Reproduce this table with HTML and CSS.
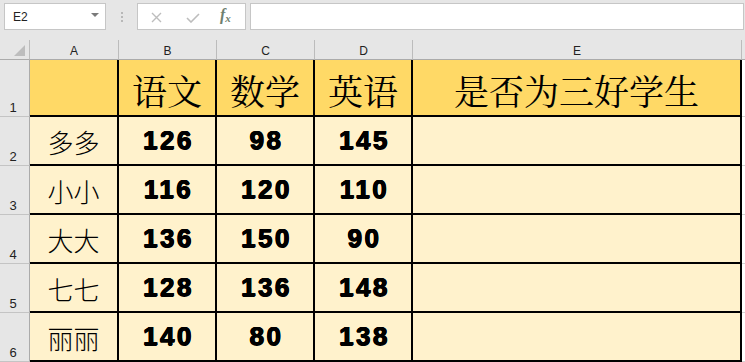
FILE: index.html
```html
<!DOCTYPE html>
<html lang="zh">
<head>
<meta charset="utf-8">
<title>Sheet</title>
<link rel="stylesheet" href="styles.css">
</head>
<body>
<div class="app">
  <div class="toolbar">
    <div class="namebox"><span class="ref">E2</span><span class="caret"></span></div>
    <div class="grip"><i></i><i></i><i></i></div>
    <div class="fxbox">
      <svg class="ico-x" width="11" height="11" viewBox="0 0 11 11"><path d="M1 1L10 10M10 1L1 10" stroke="#bdbdbd" stroke-width="1.4" fill="none"/></svg>
      <svg class="ico-ok" width="14" height="10" viewBox="0 0 14 10"><path d="M1 5L5 9L13 1" stroke="#bdbdbd" stroke-width="1.6" fill="none"/></svg>
      <span class="fx">f<sub>x</sub></span>
    </div>
    <div class="formula"></div>
  </div>
  <div class="sheet">
    <div class="corner"><span class="tri"></span></div>
    <div class="colh">A</div>
    <div class="colh">B</div>
    <div class="colh">C</div>
    <div class="colh">D</div>
    <div class="colh">E</div>
    <div class="colh colh-f"></div>

    <div class="rowh">1</div>
    <div class="cell head"></div>
    <div class="cell head">语文</div>
    <div class="cell head">数学</div>
    <div class="cell head">英语</div>
    <div class="cell head">是否为三好学生</div>
    <div class="rest"></div>

    <div class="rowh">2</div>
    <div class="cell name">多多</div>
    <div class="cell num">126</div>
    <div class="cell num">98</div>
    <div class="cell num">145</div>
    <div class="cell"></div>
    <div class="rest"></div>

    <div class="rowh">3</div>
    <div class="cell name">小小</div>
    <div class="cell num">116</div>
    <div class="cell num">120</div>
    <div class="cell num">110</div>
    <div class="cell"></div>
    <div class="rest"></div>

    <div class="rowh">4</div>
    <div class="cell name">大大</div>
    <div class="cell num">136</div>
    <div class="cell num">150</div>
    <div class="cell num">90</div>
    <div class="cell"></div>
    <div class="rest"></div>

    <div class="rowh">5</div>
    <div class="cell name">七七</div>
    <div class="cell num">128</div>
    <div class="cell num">136</div>
    <div class="cell num">148</div>
    <div class="cell"></div>
    <div class="rest"></div>

    <div class="rowh">6</div>
    <div class="cell name">丽丽</div>
    <div class="cell num">140</div>
    <div class="cell num">80</div>
    <div class="cell num">138</div>
    <div class="cell"></div>
    <div class="rest"></div>
  </div>
</div>
</body>
</html>
```
FILE: styles.css
```css
* { box-sizing: border-box; }
html, body { margin: 0; padding: 0; }
body {
  width: 745px;
  height: 362px;
  overflow: hidden;
  background: #e6e6e6;
  font-family: "Liberation Sans", "Noto Sans CJK SC", sans-serif;
}
.app { display: flex; flex-direction: column; }

.toolbar {
  height: 40px;
  display: flex;
  align-items: flex-start;
  padding-top: 3px;
  background: #e6e6e6;
}
.namebox {
  margin-left: 4px;
  width: 102px;
  height: 27px;
  background: #fff;
  border: 1px solid #c6c6c6;
  display: flex;
  align-items: center;
  justify-content: space-between;
  padding: 0 6px 0 8px;
}
.ref { font-size: 12px; color: #222; }
.caret {
  width: 0; height: 0;
  border-left: 4px solid transparent;
  border-right: 4px solid transparent;
  border-top: 4px solid #7a7a7a;
  margin-top: -3px;
}
.grip {
  width: 31px;
  height: 27px;
  display: flex;
  flex-direction: column;
  align-items: center;
  justify-content: center;
  gap: 2px;
}
.grip i { display: block; width: 2px; height: 2px; background: #b8b8b8; }
.fxbox {
  width: 109px;
  height: 27px;
  background: #fff;
  border: 1px solid #c6c6c6;
  display: flex;
  align-items: center;
  padding-left: 13px;
}
.ico-x { margin-top: 1px; }
.ico-ok { margin-left: 24px; margin-top: 2px; }
.fx {
  margin-left: 20px;
  font-family: "Liberation Serif", serif;
  font-style: italic;
  font-weight: bold;
  font-size: 16px;
  color: #6f806f;
  line-height: 1;
  margin-top: -2px;
}
.fx sub { font-size: 11px; vertical-align: -2px; }
.formula {
  margin-left: 4px;
  width: 494px;
  height: 27px;
  background: #fff;
  border: 1px solid #c6c6c6;
}

.sheet {
  display: grid;
  grid-template-columns: 30px 89px 98px 98px 98px 329px 1fr;
  grid-template-rows: 20px 57px repeat(5, 49px);
}
.corner {
  background: #e6e6e6;
  border-right: 1px solid #bcbcbc;
  border-bottom: 1px solid #ababab;
  position: relative;
}
.tri {
  position: absolute;
  right: 4px;
  bottom: 3px;
  width: 0; height: 0;
  border-left: 11px solid transparent;
  border-bottom: 11px solid #bdbdbd;
}
.colh {
  background: #e6e6e6;
  border-right: 1px solid #bcbcbc;
  border-bottom: 1px solid #ababab;
  font-size: 12px;
  color: #222;
  display: flex;
  align-items: center;
  justify-content: center;
  padding-top: 2px;
}
.colh-f { border-right: none; }
.rowh {
  background: #e6e6e6;
  border-right: 1px solid #ababab;
  border-bottom: 1px solid #c4c4c4;
  font-size: 13px;
  color: #222;
  display: flex;
  align-items: flex-end;
  justify-content: center;
  padding-bottom: 1px;
  padding-right: 3px;
}
.cell {
  background: #fff2cc;
  border-right: 2px solid #000;
  border-bottom: 2px solid #000;
  display: flex;
  align-items: center;
  justify-content: center;
  color: #000;
  white-space: nowrap;
}
.head {
  background: #ffd966;
  font-family: "Noto Serif CJK SC", "Noto Sans CJK SC", serif;
  font-size: 35px;
  padding-top: 5px;
}
.name {
  font-family: "Noto Sans CJK SC", sans-serif;
  font-size: 26px;
  font-weight: 300;
  padding-top: 2px;
}
.num {
  font-family: "Liberation Sans", sans-serif;
  font-weight: bold;
  font-size: 26px;
  letter-spacing: 2.5px;
  text-shadow: 0.6px 0 0 #000, -0.6px 0 0 #000, 0 0.5px 0 #000, 0 -0.5px 0 #000;
  padding-left: 3px;
}
.rest {
  background: #fff;
  border-bottom: 1px solid #d4d4d4;
}
```
